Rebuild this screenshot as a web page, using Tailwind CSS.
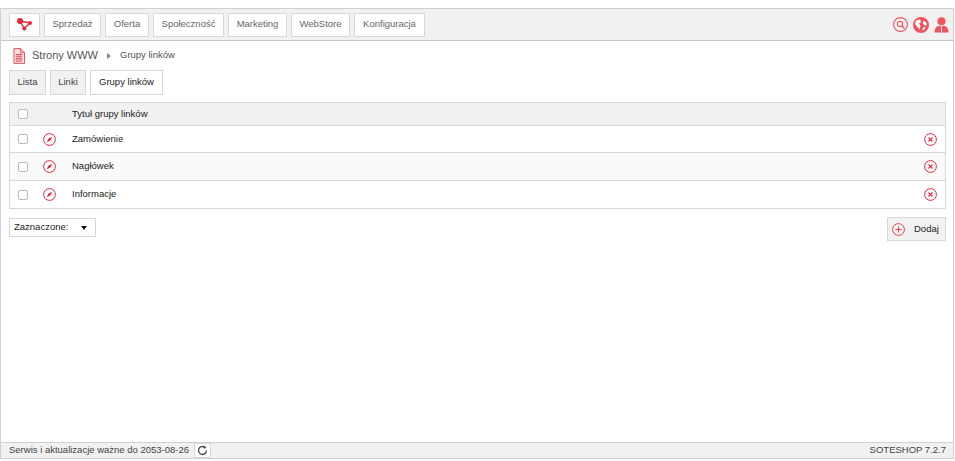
<!DOCTYPE html>
<html lang="pl">
<head>
    <meta charset="UTF-8">
    <meta name="viewport" content="width=device-width, initial-scale=1.0">
    <title>Grupy linków</title>
    <script src="https://cdn.jsdelivr.net/npm/@tailwindcss/browser@4"></script>
</head>
<body class="bg-white h-[461px] overflow-hidden font-['Liberation_Sans',sans-serif] text-[9.5px] text-[#222]">
    <div class="mt-2 h-[451px] mr-px border border-b-0 border-[#d0d0d0] flex flex-col">
        <!-- top menu -->
        <div class="h-[32px] bg-[#f1f1f1] border-b border-[#c8c8c8] flex items-center pl-2 pr-[4px] shrink-0">
            <nav class="flex gap-[4px] text-[#666]">
                <a class="w-[31px] h-[24px] bg-white border border-[#d8d8d8] flex items-center justify-center">
                    <svg width="15" height="13" viewBox="0 0 15 13"><path d="M3 3L13 5L7.3 10.5Z" fill="none" stroke="#e8293a" stroke-width="1.4"/><circle cx="3" cy="3" r="3" fill="#e8293a"/><circle cx="13" cy="5" r="2" fill="#e8293a"/><circle cx="7.3" cy="10.5" r="2" fill="#e8293a"/></svg>
                </a>
                <a class="w-[57px] h-[24px] bg-white border border-[#d8d8d8] flex items-center justify-center">Sprzedaż</a>
                <a class="w-[44px] h-[24px] bg-white border border-[#d8d8d8] flex items-center justify-center">Oferta</a>
                <a class="w-[71px] h-[24px] bg-white border border-[#d8d8d8] flex items-center justify-center">Społeczność</a>
                <a class="w-[59px] h-[24px] bg-white border border-[#d8d8d8] flex items-center justify-center">Marketing</a>
                <a class="w-[59px] h-[24px] bg-white border border-[#d8d8d8] flex items-center justify-center">WebStore</a>
                <a class="w-[71px] h-[24px] bg-white border border-[#d8d8d8] flex items-center justify-center">Konfiguracja</a>
            </nav>
            <div class="ml-auto flex items-center gap-[5px]">
                <svg width="15" height="15" viewBox="0 0 15 15" fill="none" stroke="#ee5560"><circle cx="7.5" cy="7.5" r="6.9" stroke-width="1.1"/><circle cx="7" cy="7" r="2.6" stroke-width="1.2"/><path d="M9 9L11.2 11.2" stroke-width="1.5"/></svg>
                <svg width="16" height="16" viewBox="0 0 16 16"><circle cx="8" cy="8" r="8" fill="#ee5560"/><path d="M3 3.5L7 2.5L8 5L6 6.5L7.5 9L6.5 12.5L4.5 10L2 7ZM10 4L13 5L14 8L11.5 8.5L10 6.5ZM10 10.5L12.5 10L11 13L9.5 13Z" fill="#fff"/></svg>
                <svg width="15" height="16" viewBox="0 0 16 17"><circle cx="8" cy="4.6" r="4.3" fill="#ee5560"/><path d="M0.5 16.5C0.5 11.5 3 9.5 6 9.2L8 10.5L10 9.2C13 9.5 15.5 11.5 15.5 16.5Z" fill="#ee5560"/><path d="M8 11V16" stroke="#fff" stroke-width="1"/></svg>
            </div>
        </div>

        <!-- breadcrumb -->
        <div class="flex items-center h-[29px] pl-[12px] shrink-0">
            <svg width="12" height="16" viewBox="0 0 13 17"><path d="M1 .5H8.5L12.5 4.5V16.5H1Z" fill="#fbe3e3" stroke="#e8434e"/><path d="M8 .5V5H12.5" fill="#f7b8bb" stroke="#e8434e" stroke-width=".8"/><path d="M3 7H10M3 9.3H10M3 11.6H10M3 13.9H10" stroke="#e8434e" stroke-width="1.2"/></svg>
            <span class="ml-[7px] text-[11px] text-[#555]">Strony WWW</span>
            <span class="ml-[9px] w-0 h-0 border-y-[3px] border-y-transparent border-l-[4px] border-l-[#888]"></span>
            <span class="ml-[9px] text-[#555]">Grupy linków</span>
        </div>

        <!-- tabs -->
        <div class="flex gap-[4px] pl-2 shrink-0">
            <a class="w-[37px] h-[25px] bg-[#f1f1f1] border border-[#d8d8d8] flex items-center justify-center text-[#444]">Lista</a>
            <a class="w-[36px] h-[25px] bg-[#f1f1f1] border border-[#d8d8d8] flex items-center justify-center text-[#444]">Linki</a>
            <a class="w-[73px] h-[25px] bg-white border border-[#d8d8d8] flex items-center justify-center">Grupy linków</a>
        </div>

        <!-- list -->
        <div class="mt-[7px] ml-2 mr-[7px] border border-[#d8d8d8] shrink-0">
            <div class="h-[23px] bg-[#f1f1f1] border-b border-[#d8d8d8] flex items-center">
                <span class="w-[10px] h-[10px] ml-[8px] bg-white border border-[#bbb] rounded-[2px]"></span>
                <span class="ml-[44px]">Tytuł grupy linków</span>
            </div>
            <div class="h-[27px] bg-white border-b border-[#d8d8d8] flex items-center">
                <span class="w-[10px] h-[10px] ml-[8px] bg-white border border-[#bbb] rounded-[2px]"></span>
                <svg class="ml-[15px]" width="13" height="13" viewBox="0 0 13 13" fill="none"><circle cx="6.5" cy="6.5" r="5.9" stroke="#e8293a" stroke-width="1"/><path d="M9.3 3.7L7.4 7.4L3.7 9.3L5.6 5.6Z" fill="#e8293a"/></svg>
                <span class="ml-[16px]">Zamówienie</span>
                <svg class="ml-auto mr-[8px]" width="13" height="13" viewBox="0 0 13 13" fill="none" stroke="#e8293a"><circle cx="6.5" cy="6.5" r="5.9" stroke-width="1"/><path d="M4.5 4.5L8.5 8.5M8.5 4.5L4.5 8.5" stroke-width="1.1"/></svg>
            </div>
            <div class="h-[28px] bg-[#fafafa] border-b border-[#d8d8d8] flex items-center">
                <span class="w-[10px] h-[10px] ml-[8px] bg-white border border-[#bbb] rounded-[2px]"></span>
                <svg class="ml-[15px]" width="13" height="13" viewBox="0 0 13 13" fill="none"><circle cx="6.5" cy="6.5" r="5.9" stroke="#e8293a" stroke-width="1"/><path d="M9.3 3.7L7.4 7.4L3.7 9.3L5.6 5.6Z" fill="#e8293a"/></svg>
                <span class="ml-[16px]">Nagłówek</span>
                <svg class="ml-auto mr-[8px]" width="13" height="13" viewBox="0 0 13 13" fill="none" stroke="#e8293a"><circle cx="6.5" cy="6.5" r="5.9" stroke-width="1"/><path d="M4.5 4.5L8.5 8.5M8.5 4.5L4.5 8.5" stroke-width="1.1"/></svg>
            </div>
            <div class="h-[27px] bg-white flex items-center">
                <span class="w-[10px] h-[10px] ml-[8px] bg-white border border-[#bbb] rounded-[2px]"></span>
                <svg class="ml-[15px]" width="13" height="13" viewBox="0 0 13 13" fill="none"><circle cx="6.5" cy="6.5" r="5.9" stroke="#e8293a" stroke-width="1"/><path d="M9.3 3.7L7.4 7.4L3.7 9.3L5.6 5.6Z" fill="#e8293a"/></svg>
                <span class="ml-[16px]">Informacje</span>
                <svg class="ml-auto mr-[8px]" width="13" height="13" viewBox="0 0 13 13" fill="none" stroke="#e8293a"><circle cx="6.5" cy="6.5" r="5.9" stroke-width="1"/><path d="M4.5 4.5L8.5 8.5M8.5 4.5L4.5 8.5" stroke-width="1.1"/></svg>
            </div>
        </div>

        <!-- actions -->
        <div class="mt-[8px] ml-2 mr-[7px] flex items-start justify-between shrink-0">
            <div class="mt-[1px] w-[87px] h-[19px] bg-white border border-[#d8d8d8] flex items-center pl-[4px] text-[#222]">
                Zaznaczone:
                <span class="ml-[13px] w-0 h-0 border-x-[3.5px] border-x-transparent border-t-[4px] border-t-[#111]"></span>
            </div>
            <a class="w-[59px] h-[24px] bg-[#f1f1f1] border border-[#d8d8d8] flex items-center pl-[4px]">
                <svg width="13" height="13" viewBox="0 0 13 13" fill="none" stroke="#e8434e"><circle cx="6.5" cy="6.5" r="5.9" stroke-width="1"/><path d="M6.5 3.5V9.5M3.5 6.5H9.5" stroke-width="1.1"/></svg>
                <span class="ml-[9px]">Dodaj</span>
            </a>
        </div>

        <!-- footer -->
        <div class="mt-auto h-[17px] bg-[#f1f1f1] border-y border-[#d0d0d0] flex items-center pl-2 pr-[7px] text-[#444] shrink-0">
            <span>Serwis i aktualizacje ważne do 2053-08-26</span>
            <span class="ml-[5px] w-[17px] h-[15px] bg-white border border-[#d8d8d8] flex items-center justify-center">
                <svg width="11" height="11" viewBox="0 0 11 11" fill="none" stroke="#444" stroke-width="1.3"><path d="M9.5 5.5A4 4 0 1 1 7.6 2.1"/><path d="M6.6 .4L9.4 2.2L7 4" fill="#444" stroke="none"/></svg>
            </span>
            <span class="ml-auto">SOTESHOP 7.2.7</span>
        </div>
    </div>
</body>
</html>
